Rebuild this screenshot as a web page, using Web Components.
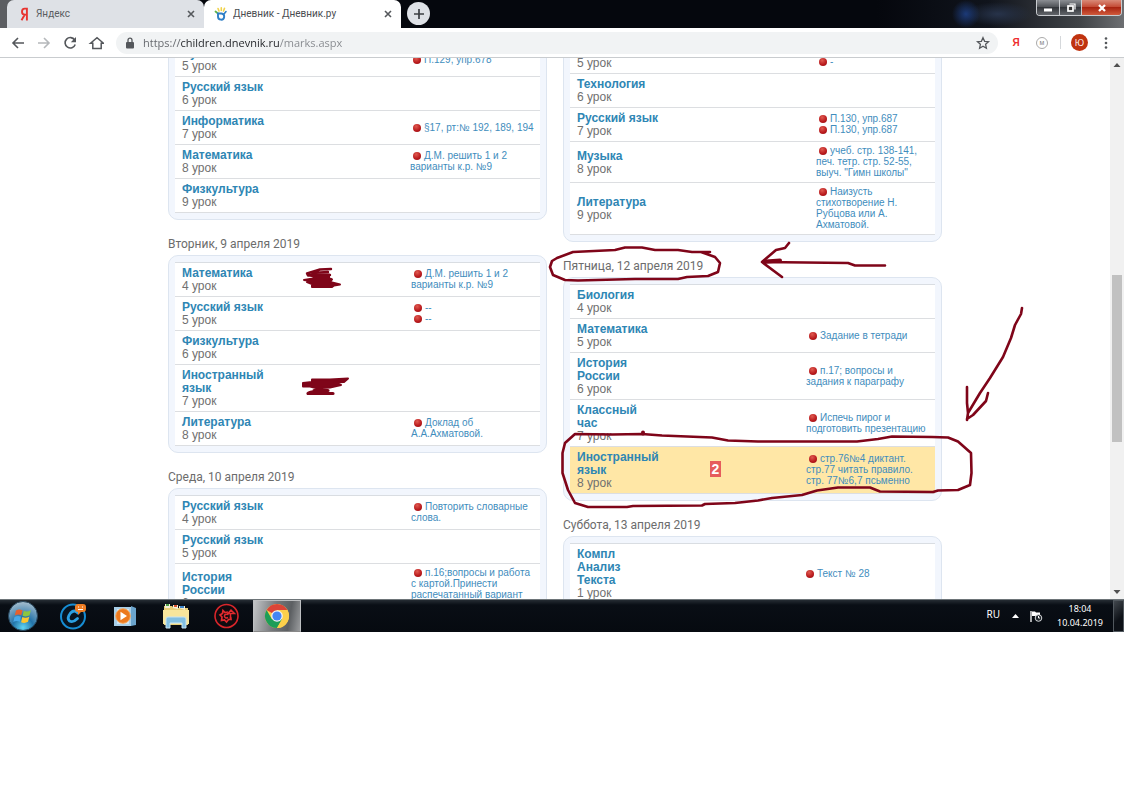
<!DOCTYPE html>
<html lang="ru">
<head>
<meta charset="utf-8">
<title>Дневник - Дневник.ру</title>
<style>
  body { margin: 0; background: #fff; font-family: "Liberation Sans", Arial, sans-serif; }
</style>
</head>
<body>
<desktop-screen>
  <browser-tabs slot="tabs">
    <browser-tab>
      <svg slot="icon" viewBox="0 0 14 14" width="14" height="14"><path d="M9.9.8V13.400M9.900 1.600H7.700Q5 1.600 5 4.700Q5 7.600 8 7.600H9.900M7.700 7.700L4.500 13.300" fill="none" stroke="#e8332f" stroke-width="1.900"/></svg>
      Яндекс
    </browser-tab>
    <browser-tab active>
      <svg slot="icon" viewBox="0 0 14 14" width="14" height="14"><path d="M4 1.500L5 4M7.300.8V3.500M10.500 1.300L9.500 4" stroke="#f0d24a" stroke-width="1.600" fill="none" stroke-linecap="round"/><path d="M1.500 4.500L4 6.500" stroke="#5fb34b" stroke-width="1.800" stroke-linecap="round"/><path d="M4 8V6.500H7.500A3.100 3.100 0 1 1 4 9.500V8" fill="none" stroke="#2f7fc6" stroke-width="1.900"/><path d="M10 7L12 4.500" fill="none" stroke="#2f7fc6" stroke-width="1.600" stroke-linecap="round"/></svg>
      Дневник - Дневник.ру
    </browser-tab>
  </browser-tabs>
  <browser-toolbar slot="toolbar"></browser-toolbar>
  <diary-page slot="page"></diary-page>
  <task-bar slot="taskbar"></task-bar>
</desktop-screen>

<script>
const define = (name, markup, setup) => {
  const tpl = document.createElement('template');
  tpl.innerHTML = markup;
  customElements.define(name, class extends HTMLElement {
    constructor() {
      super();
      this.attachShadow({ mode: 'open' }).append(tpl.content.cloneNode(true));
    }
    connectedCallback() { if (setup) setup(this, this.shadowRoot); }
  });
};

define('browser-tab', `
  <style>
    :host { display: flex; align-items: center; box-sizing: border-box; flex: 0 0 197px; height: 28px; padding: 0 9px 0 10px;
      background: #dee1e6; color: #5a5d61; border-radius: 7px 7px 0 0; font: 10px/16px Roboto, sans-serif; }
    :host([active]) { background: #fff; color: #4a4d51; }
    .title { flex: 1; margin-left: 5px; overflow: hidden; white-space: nowrap; }
    ::slotted(svg) { display: block; }
    button { all: unset; width: 8px; height: 8px; display: block; }
    svg { display: block; }
  </style>
  <slot name="icon"></slot><span class="title"><slot></slot></span>
  <button aria-label="Закрыть вкладку"><svg viewBox="0 0 8 8" width="8" height="8"><path d="M1 1L7 7M7 1L1 7" stroke="#55585c" stroke-width="1.600"/></svg></button>
`);

define('browser-tabs', `
  <style>
    :host { display: flex; height: 28px; padding-left: 7px; position: relative;
      background: radial-gradient(circle at 966px 14px, #1c3a78 0, #1c3a7800 14px),
        radial-gradient(ellipse 34px 12px at 998px 14px, #27334a 0, #27334a00 100%),
        linear-gradient(90deg, #5c5e62 0, #5c5e62 16px, #05070d 20px, #05070d 78%, #10141c 88%, #3f4246 96%, #6d6f72 100%); }
    button { all: unset; box-sizing: border-box; display: flex; align-items: center; justify-content: center; }
    .add { width: 23px; height: 23px; margin: 2px 0 0 6px; border-radius: 50%; background: #dee1e6; }
    .controls { position: absolute; right: 2px; top: 0; display: flex; height: 15px; border: 1px solid #c9ccd0; border-top: 0; border-radius: 0 0 4px 4px; overflow: hidden; }
    .controls button { width: 23px; height: 15px; background: linear-gradient(#8b8e93, #4a4d52 50%, #33363b 50%, #62656a); border-right: 1px solid #c9ccd0; }
    .controls button:nth-child(2) { width: 22px; }
    .controls button.close { width: 39px; border: 0; background: linear-gradient(#d98a78, #c2452f 50%, #a92411 50%, #d05a3c); }
  </style>
  <slot></slot>
  <button class="add" aria-label="Новая вкладка"><svg width="12" height="12" viewBox="0 0 12 12"><path d="M6 1V11M1 6H11" stroke="#3c3f43" stroke-width="1.700"/></svg></button>
  <div class="controls">
    <button aria-label="Свернуть"><svg width="10" height="10" viewBox="0 0 10 10"><rect x="1" y="5.500" width="8" height="3" fill="#fff"/></svg></button>
    <button aria-label="Развернуть"><svg width="10" height="10" viewBox="0 0 10 10"><path d="M3.500 1H9V6.500" fill="none" stroke="#fff" stroke-width="1.200"/><rect x="2" y="3" width="5" height="5" fill="#333" stroke="#fff" stroke-width="1.700"/></svg></button>
    <button class="close" aria-label="Закрыть"><svg width="10" height="10" viewBox="0 0 10 10"><path d="M2 2L8 8M8 2L2 8" stroke="#fff" stroke-width="2.300"/></svg></button>
  </div>
`);

define('browser-toolbar', `
  <style>
    :host { display: flex; align-items: center; box-sizing: border-box; height: 30px; padding: 0 12px 0 10px; background: #fff; border-bottom: 1px solid #c9cccf; }
    button { all: unset; display: block; flex: none; }
    svg { display: block; }
    .nav { display: flex; gap: 10px; margin-right: 12px; }
    .omnibox { flex: 1; display: flex; align-items: center; height: 22px; border-radius: 11px; background: #f1f3f4; padding: 0 7px; }
    input { flex: 1; min-width: 0; border: 0; outline: 0; padding: 0; margin: 0 0 0 6px; height: 18px; font: 11px/18px "Open Sans", sans-serif; color: #35383c;
      background: linear-gradient(90deg, #62656a 37px, #202226 37px, #202226 137px, #85888d 137px) text; -webkit-text-fill-color: transparent; }
    .actions { display: flex; align-items: center; margin-left: 10px; }
    .ya { width: 16px; text-align: center; font: bold 10px/16px "Liberation Sans", sans-serif; color: #ee2e2e; }
    .m { box-sizing: border-box; width: 12px; height: 12px; margin: 0 12px; border: 1px solid #aaa; border-radius: 50%; font: 7px/10px "Liberation Sans", sans-serif; color: #888; text-align: center; }
    .line { width: 1px; height: 13px; background: #d5d8db; }
    .avatar { width: 17px; height: 17px; margin: 0 12px 0 10px; border-radius: 50%; background: #c0330f; color: #fff; font: 9px/17px "Open Sans", sans-serif; text-align: center; }
  </style>
  <div class="nav">
    <button aria-label="Назад"><svg width="16" height="16" viewBox="0 0 16 16"><path d="M14 8H3M8 3L3 8L8 13" fill="none" stroke="#54575b" stroke-width="1.600"/></svg></button>
    <button aria-label="Вперёд"><svg width="16" height="16" viewBox="0 0 16 16"><path d="M2 8H13M8 3L13 8L8 13" fill="none" stroke="#b5b8bb" stroke-width="1.600"/></svg></button>
    <button aria-label="Обновить"><svg width="16" height="16" viewBox="0 0 16 16"><path d="M12.700 5A5.200 5.200 0 1 0 13.200 9.500" fill="none" stroke="#54575b" stroke-width="1.600"/><path d="M14 2V7.200H8.800Z" fill="#54575b"/></svg></button>
    <button aria-label="Домой"><svg width="16" height="16" viewBox="0 0 16 16"><path d="M2.500 8.300L9 2.700L15.500 8.300H13.200V13.500H4.800V8.300Z" fill="none" stroke="#54575b" stroke-width="1.500"/></svg></button>
  </div>
  <div class="omnibox">
    <svg width="14" height="14" viewBox="0 0 14 14"><rect x="3" y="6" width="8" height="6.500" rx="1" fill="#54575b"/><path d="M5 6V4.200A2 2 0 0 1 9 4.200V6" fill="none" stroke="#54575b" stroke-width="1.300"/></svg>
    <input type="text" aria-label="Адресная строка" value="https://children.dnevnik.ru/marks.aspx">
    <button aria-label="Добавить в закладки"><svg width="16" height="16" viewBox="0 0 16 16"><path d="M8 2.700L9.600 6.300L13.500 6.700L10.600 9.300L11.400 13.200L8 11.200L4.600 13.200L5.400 9.300L2.500 6.700L6.400 6.300Z" fill="none" stroke="#54575b" stroke-width="1.300"/></svg></button>
  </div>
  <div class="actions">
    <button class="ya">Я</button><button class="m">м</button><span class="line"></span>
    <button class="avatar">Ю</button>
    <button aria-label="Меню"><svg width="12" height="14" viewBox="0 0 12 14"><g fill="#54575b"><circle cx="6" cy="2.500" r="1.300"/><circle cx="6" cy="7" r="1.300"/><circle cx="6" cy="11.500" r="1.300"/></g></svg></button>
  </div>
`);

define('diary-day', `
  <style>
    :host { display: block; }
    h2 { margin: 0; padding: 17px 0 3px; font: 12px/15px Roboto, sans-serif; color: #6c6c6c; }
    .card { border: 1px solid #dde5f0; border-radius: 10px; background: #f2f6fd; padding: 6px; }
    table { width: 100%; table-layout: fixed; border-collapse: separate; border-spacing: 0; border-top: 1px solid #d9dde2; background: #fff; }
    td { border-bottom: 1px solid #dcdee1; padding: 4px 0 3px; vertical-align: middle; }
    .subject { width: 94px; padding-left: 7px; font-size: 12px; line-height: 13px; color: #707070; white-space: nowrap; }
    .subject a { color: #2e86b4; font-weight: bold; }
    .mark { padding: 2px 0 4px 39px; font-size: 14px; line-height: 16px; }
    .mark b { display: block; width: 11px; background: #e65c5c; color: #fff; text-align: center; }
    .work { width: var(--work, 130px); padding: 3px 0 4px; font-size: 10px; line-height: 11px; color: #3f8dbd; white-space: nowrap; }
    a { color: inherit; text-decoration: none; }
    i { display: inline-block; width: 8px; height: 8px; margin: 0 3px; border-radius: 50%; vertical-align: -1px; background: radial-gradient(circle at 40% 30%, #e05a50, #b8191c 60%, #8f1216); }
    tr.missed td { background: #ffe7a6; }
  </style>
  <h2></h2>
  <div class="card"><table><tbody></tbody></table></div>
`);

const addLines = (node, text) => text.split('|').forEach((part, i) => {
  if (i) node.append(document.createElement('br'));
  if (part[0] === '*') { node.append(document.createElement('i')); part = part.slice(1); }
  node.append(part);
});

const fillDay = (el, day) => {
  const root = el.shadowRoot;
  const h2 = root.querySelector('h2');
  if (day.title) h2.textContent = day.title; else h2.remove();
  el.style.setProperty('--work', day.work + 'px');
  const body = root.querySelector('tbody');
  for (const [subject, lesson, work, mark] of day.lessons) {
    const row = body.insertRow();
    const s = row.insertCell(); s.className = 'subject';
    const link = document.createElement('a'); link.href = '#'; addLines(link, subject);
    s.append(link, document.createElement('br'), lesson + ' урок');
    const m = row.insertCell(); m.className = 'mark';
    if (mark) { const b = document.createElement('b'); b.textContent = mark; m.append(b); row.className = 'missed'; }
    const w = row.insertCell(); w.className = 'work';
    if (work) { const a = document.createElement('a'); a.href = '#'; addLines(a, work); w.append(a); }
  }
};

const week = {
  left: [
    { work: 130, lessons: [
      ['Русский язык', 5, '*П.129, упр.678'], ['Русский язык', 6, ''], ['Информатика', 7, '*§17, рт:№ 192, 189, 194'],
      ['Математика', 8, '*Д.М. решить 1 и 2|варианты к.р. №9'], ['Физкультура', 9, '']] },
    { title: 'Вторник, 9 апреля 2019', work: 129, lessons: [
      ['Математика', 4, '*Д.М. решить 1 и 2|варианты к.р. №9'], ['Русский язык', 5, '*--|*--'], ['Физкультура', 6, ''],
      ['Иностранный|язык', 7, ''], ['Литература', 8, '*Доклад об|А.А.Ахматовой.']] },
    { title: 'Среда, 10 апреля 2019', work: 129, lessons: [
      ['Русский язык', 4, '*Повторить словарные|слова.'], ['Русский язык', 5, ''],
      ['История|России', 6, '*п.16;вопросы и работа|с картой.Принести|распечатанный вариант|\u00a0']] }
  ],
  right: [
    { work: 119, lessons: [
      ['Технология', 5, '*-|*-'], ['Технология', 6, ''], ['Русский язык', 7, '*П.130, упр.687|*П.130, упр.687'],
      ['Музыка', 8, '*учеб. стр. 138-141,|печ. тетр. стр. 52-55,|выуч. "Гимн школы"'],
      ['Литература', 9, '*Наизусть|стихотворение Н.|Рубцова или А.|Ахматовой.']] },
    { title: 'Пятница, 12 апреля 2019', work: 129, lessons: [
      ['Биология', 4, ''], ['Математика', 5, '*Задание в тетради'], ['История|России', 6, '*п.17; вопросы и|задания к параграфу'],
      ['Классный|час', 7, '*Испечь пирог и|подготовить презентацию'],
      ['Иностранный|язык', 8, '*стр.76№4 диктант.|стр.77 читать правило.|стр. 77№6,7 псьменно', '2']] },
    { title: 'Суббота, 13 апреля 2019', work: 132, lessons: [
      ['Компл|Анализ|Текста', 1, '*Текст № 28']] }
  ]
};

define('scroll-rail', `
  <style>
    :host { display: flex; flex-direction: column; flex: 0 0 14px; background: #f1f1f1; }
    svg { display: block; flex: none; }
    .track { flex: 1; display: flex; flex-direction: column; align-items: center; }
    .before { flex: 203; } .thumb { flex: 167; width: 10px; background: #c1c1c1; } .after { flex: 143; }
  </style>
  <svg width="14" height="14" viewBox="0 0 14 14"><path d="M3.500 9L7 5L10.500 9Z" fill="#505050"/></svg>
  <div class="track"><div class="before"></div><div class="thumb"></div><div class="after"></div></div>
  <svg width="14" height="14" viewBox="0 0 14 14"><path d="M3.500 5L7 9L10.500 5Z" fill="#505050"/></svg>
`);

define('diary-page', `
  <style>
    :host { display: flex; height: 541px; overflow: hidden; background: #fff; }
    main { flex: 1; display: flex; justify-content: center; align-items: flex-start; gap: 16px; overflow: hidden; }
    section { width: 379px; }
    .left { margin-top: -23px; }
    .right { margin-top: -26px; }
  </style>
  <main><section class="left"></section><section class="right"></section></main>
  <scroll-rail></scroll-rail>
`, (el, root) => {
  for (const side of ['left', 'right'])
    for (const day of week[side]) {
      const node = document.createElement('diary-day');
      root.querySelector('.' + side).append(node);
      fillDay(node, day);
    }
});

define('pen-marks', `
  <style>
    :host { display: block; position: absolute; inset: 0; pointer-events: none; }
    svg { display: block; width: 100%; height: 100%; }
  </style>
  <svg viewBox="0 0 1124 632" preserveAspectRatio="xMidYMin meet" fill="none" stroke="#7f0519" stroke-width="2.600" stroke-linejoin="round" stroke-linecap="round">
    <path d="M710 252L692 252L678 250H655L642 247.500H625L615 250L573 252L557 258L552 261L550 267L553 275L565 280L578 280.500L635 279H678L687 277L708 276L718 272L720 263L715 257L701 252"/>
    <path d="M885 265.500H855L848 263L762 262M789 243L785 248L776 250L762 262L782 277"/>
    <path d="M766 261.500L780 260.500" stroke-width="4"/>
    <path d="M1022 308L1021 314L1015 325L1011 338L1003 357L990 378L980 393L968 413L967 420M967 387V403L968 413M988 393L986 401L973 415L967 419"/>
    <path d="M575 434L565 443L562.500 453V473L568 490L575 503L588 507H627L633 506L702 505.500L705 504L735 503L758 500.500L772 498L802 495L817 490.500L838 487.500H870L880 491.500L933 492L938 490.500L958 490L970 485L971.500 473L971 453L958 441.500L948 437.500L932 437L892 436.500L878 439L857 441.500H758L728 440.500L712 437.500L662 435.500L642 434L612 434.500Z"/>
    <path d="M643 432.500V433.500" stroke-width="4"/>
    <path stroke-width="2.400" d="M331 269L320 269.500L307 273.500L308 275.500L330 275M312 273L328 272"/>
    <path fill="#7f0519" stroke-width="2" d="M309 274.500L329 274.500L329 278L332 279.500L330 282L340 284.500L334 285.500L332 287L312 287L312 284L307 282L311 281L304 280L316 278Z"/>
    <path fill="#7f0519" stroke-width="2" d="M312 379.500L330 379.500L348 378.500L344 382L334 382.500L341 385L330 387.500L322 388L316 388L310 386.500L303 386.500L303 383L312 382Z"/>
    <path stroke-width="3.200" d="M318 390L310 392.500L308 393.500L333 393.500M314 390.500L328 390.500"/>
  </svg>
`);

define('task-bar', `
  <style>
    :host { display: flex; align-items: stretch; box-sizing: border-box; height: 33px; border-top: 1px solid #6d7478; background: linear-gradient(#252c33, #090e15 5px, #060a10); color: #fff; }
    button { all: unset; display: flex; align-items: center; justify-content: center; }
    .apps { flex: 1; display: flex; }
    .apps button { width: 51px; }
    .apps button:first-child { width: 45px; margin-right: 3px; }
    .apps button.open { box-sizing: border-box; width: 48px; margin-left: 1px; border: 1px solid #bdbfc1; border-bottom-color: #888; background: linear-gradient(100deg, #c2c4c6, #75787b 45%, #5c5f62 75%, #9a9c9e); }
    .tray { display: flex; align-items: center; font: 9px/14px "Noto Sans", sans-serif; }
    .lang { margin-top: -5px; font-size: 10px; line-height: 12px; }
    .tray svg { display: block; }
    .arrow { margin: 0 10px 0 12px; }
    .clock { margin: 0 10px 0 14px; text-align: center; }
    .desk { width: 11px; align-self: stretch; box-sizing: border-box; border: 1px solid #51585e; background: linear-gradient(135deg, #42484e, #0d1117 60%); }
  </style>
  <div class="apps">
    <button aria-label="Пуск"><svg width="32" height="32" viewBox="0 0 32 32"><defs><radialGradient id="orb" cx=".5" cy=".9" r=".9"><stop offset="0" stop-color="#5fd5f5"/><stop offset=".4" stop-color="#2373a8"/><stop offset="1" stop-color="#a9bfcf"/></radialGradient></defs><circle cx="16" cy="16" r="14.500" fill="url(#orb)" stroke="#27465c"/><path d="M9 10.500Q12 8.500 15.500 10.300L14.300 15.300Q11 13.800 7.800 15.600Z" fill="#e8602c"/><path d="M16.800 10.800Q20 12.300 23.800 10.200L22.600 15.300Q19 17.300 15.600 15.800Z" fill="#8cc63f"/><path d="M7.500 16.900Q10.700 15.200 14 16.600L12.800 21.700Q9.500 20.200 6.300 22Z" fill="#48a8e8"/><path d="M15.300 17.100Q18.600 18.700 22.300 16.700L21 21.800Q17.500 23.800 14.100 22.200Z" fill="#fcc62e"/></svg></button>
    <button aria-label="Браузер C"><svg width="30" height="30" viewBox="0 0 30 30"><circle cx="14" cy="15.500" r="12" fill="#071420" stroke="#168cd2" stroke-width="2"/><path d="M19 12Q15.500 8 11.500 12Q7.500 17 10.500 20Q14 22 18.500 17.500" fill="none" stroke="#2ba0e2" stroke-width="2.800" stroke-linecap="round"/><rect x="16" y="3" width="11" height="8" rx="3" fill="#ef7d23"/><path d="M19 11V14L23 10" fill="#ef7d23"/><path d="M19 6H20M23 6H24M19 8.500H24" stroke="#fff"/></svg></button>
    <button aria-label="Медиаплеер"><svg width="26" height="26" viewBox="0 0 26 26"><path d="M2 4H19V23H2Z" fill="#a8cfe8"/><path d="M19 3L24 5V22L19 23Z" fill="#6ba4cc"/><path d="M5 6H17V21H5Z" fill="#cfe6f3"/><circle cx="11" cy="13" r="7.300" fill="#ec7a1f" stroke="#f6a65b"/><path d="M8.500 8.800L15 13L8.500 17.200Z" fill="#fff"/></svg></button>
    <button aria-label="Проводник"><svg width="28" height="28" viewBox="0 0 28 28"><path d="M2 4H10L12 6H26V23H2Z" fill="#e9cf76"/><path d="M3 6V2H8V6M11 6V3H16V7M17 6V4H23V8" fill="#f5f0d8"/><path d="M4 3H7" stroke="#4b9d45" stroke-width="2"/><path d="M12 4H15" stroke="#d8512e" stroke-width="2"/><path d="M18 5H22" stroke="#3c84c9" stroke-width="2"/><path d="M1 8H27V22H1Z" fill="#f7e59c"/><path d="M4 17Q4 15 6 15H22Q24 15 24 17V26H20V21H8V26H4Z" fill="#82bfe2" stroke="#c7e4f4"/></svg></button>
    <button aria-label="Игровой клиент"><svg width="28" height="28" viewBox="0 0 28 28"><circle cx="13.500" cy="14" r="11.500" fill="#100b0f" stroke="#d9262b" stroke-width="1.600"/><path d="M15 10L12 10.500L10 8.500L9.500 11.500L7 13L9 15L8.500 18.500L11.500 18L13.500 20L15.500 17.500L18 17.500L17.500 15" fill="none" stroke="#e02a2e" stroke-width="1.700"/><path d="M15.500 12.500Q11 11.500 11.500 14.500Q12.500 17 15 15.500M17.500 17V11M15 11.500L18 8L21.500 11.500Z" fill="none" stroke="#e02a2e" stroke-width="1.500"/></svg></button>
    <button class="open" aria-label="Chrome"><svg width="26" height="26" viewBox="0 0 26 26"><circle cx="13" cy="13" r="12" fill="#fcd04b"/><path d="M13 13L2.600 7A12 12 0 0 1 23.400 7H13Z" fill="#dc4437"/><path d="M2.600 7A12 12 0 0 0 13 25L18.200 16L13 13L7.800 16Z" fill="#1c9d58"/><path d="M13 7H23.400A12 12 0 0 1 13 25L18.200 16Z" fill="#fcd04b"/><circle cx="13" cy="13" r="5.800" fill="#f4f4f4"/><circle cx="13" cy="13" r="4.600" fill="#4486f4"/></svg></button>
  </div>
  <div class="tray">
    <span class="lang">RU</span>
    <svg class="arrow" width="7" height="5" viewBox="0 0 7 5"><path d="M0 4L3.500 0L7 4Z" fill="#fff"/></svg>
    <svg width="14" height="14" viewBox="0 0 14 14"><path d="M2 2V13" stroke="#fff" stroke-width="1.300"/><path d="M3 2.500H6L7 3.500H11V8H7L6 7H3Z" fill="#fff"/><circle cx="9.500" cy="9" r="3.300" fill="#20262c" stroke="#d6d8da"/><path d="M9.500 7V9H11" stroke="#fff" fill="none"/></svg>
    <div class="clock">18:04<br>10.04.2019</div>
    <button class="desk" aria-label="Показать рабочий стол"></button>
  </div>
`);

define('desktop-screen', `
  <style>
    :host { display: block; position: relative; }
  </style>
  <slot name="tabs"></slot>
  <slot name="toolbar"></slot>
  <slot name="page"></slot>
  <slot name="taskbar"></slot>
  <pen-marks></pen-marks>
`);
</script>
</body>
</html>
